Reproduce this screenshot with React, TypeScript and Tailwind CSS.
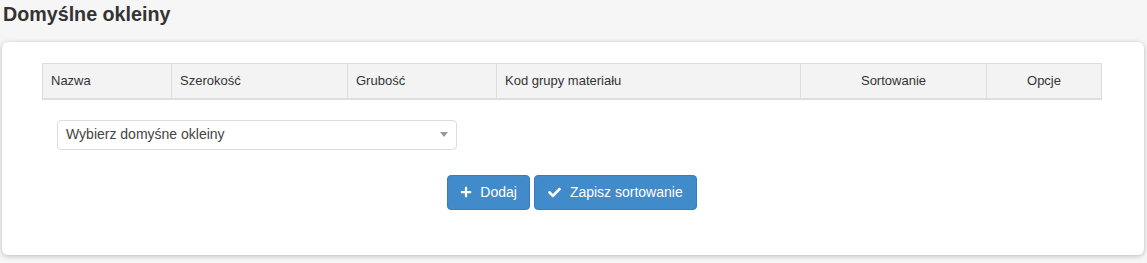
import { FaPlus, FaCheck } from "react-icons/fa";

const columns = [
  { label: "Nazwa", width: "w-[129px]", align: "text-left" },
  { label: "Szerokość", width: "w-[176px]", align: "text-left" },
  { label: "Grubość", width: "w-[149px]", align: "text-left" },
  { label: "Kod grupy materiału", width: "w-[304px]", align: "text-left" },
  { label: "Sortowanie", width: "w-[186px]", align: "text-center" },
  { label: "Opcje", width: "", align: "text-center" },
];

export default function App() {
  return (
    <div className="h-[263px] w-[1147px] bg-[#f6f6f6] font-['Liberation_Sans',Arial,sans-serif] text-[#333]">
      <h1 className="px-[3px] pt-[3px] text-[19.7px] font-bold leading-[22px] text-[#333]">
        Domyślne okleiny
      </h1>

      {/* Card */}
      <div className="mx-[2px] mt-[17px] w-[1142px] rounded-[6px] bg-white pb-[45px] pl-[40px] pr-[42px] pt-[21px] shadow-[0_1px_5px_rgba(0,0,0,0.25)]">
        <table className="w-[1060px] border-collapse text-[13px]">
          <thead>
            <tr className="bg-[#f3f3f3]">
              {columns.map((c) => (
                <th
                  key={c.label}
                  className={`h-[35px] border border-b-2 border-[#dddddd] px-[8px] font-normal text-[#333] ${c.width} ${c.align}`}
                >
                  {c.label}
                </th>
              ))}
            </tr>
          </thead>
        </table>

        {/* Select */}
        <div className="mt-[20px] ml-[15px] flex h-[30px] w-[400px] items-center justify-between rounded-[4px] border border-[#dcdcdc] bg-white pl-[8px] pr-[8px] text-[14px] text-[#444]">
          <span>Wybierz domyśne okleiny</span>
          <span className="h-0 w-0 border-l-[4px] border-r-[4px] border-t-[5px] border-l-transparent border-r-transparent border-t-[#999]" />
        </div>

        {/* Buttons */}
        <div className="mt-[25px] flex justify-center gap-[4px]">
          <button className="flex h-[35px] items-center gap-[8px] rounded-[4px] border border-[#357ebd] bg-[#428bca] px-[12px] text-[14px] text-white">
            <FaPlus size={12} />
            Dodaj
          </button>
          <button className="flex h-[35px] items-center gap-[9px] rounded-[4px] border border-[#357ebd] bg-[#428bca] px-[13px] text-[14px] text-white">
            <FaCheck size={13} />
            Zapisz sortowanie
          </button>
        </div>
      </div>
    </div>
  );
}
